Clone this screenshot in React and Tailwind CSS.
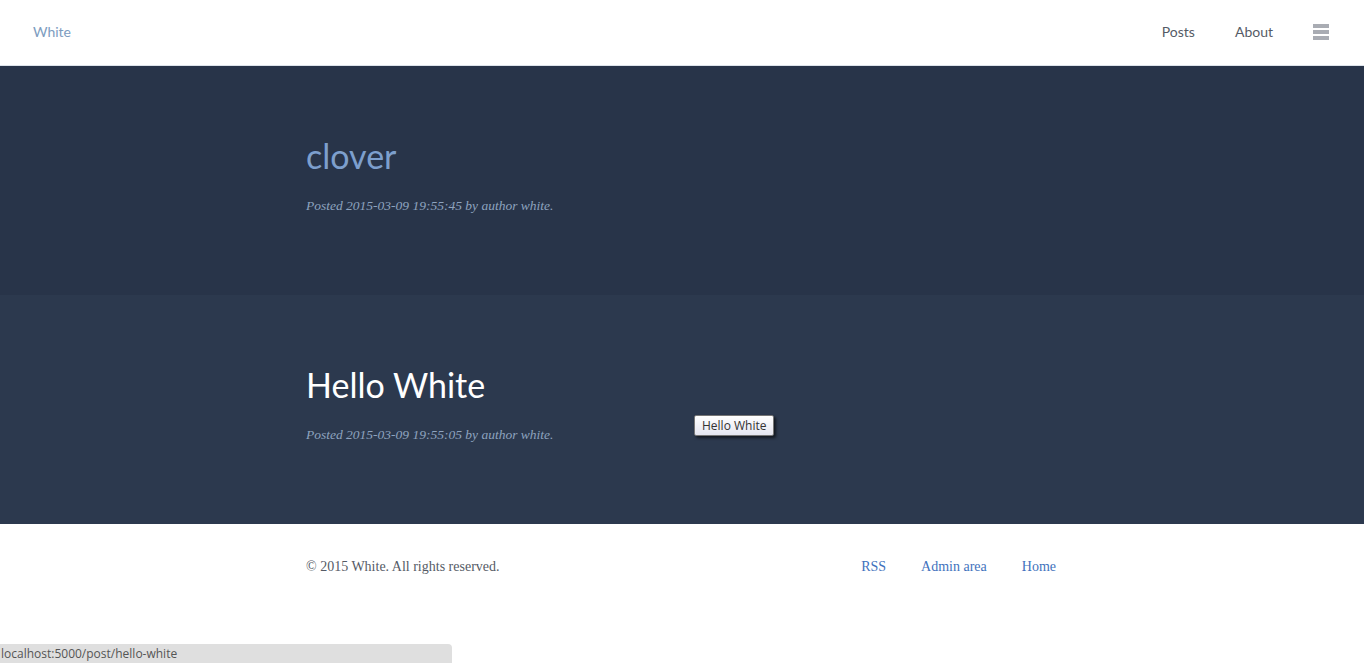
export default function App() {
  return (
    <div className="min-h-[663px] bg-white relative font-['Lato',sans-serif]">
      <header className="h-[66px] flex items-center justify-between pl-[33px] pr-[35px] pb-[3px] border-b border-[#dde3ea]">
        <a className="text-[14px] text-[#7d9cc0]">White</a>
        <nav className="flex items-center gap-[40px] text-[14px] text-[#555b66]">
          <a>Posts</a>
          <a>About</a>
          <span className="flex flex-col gap-[2px] w-[16px] mt-[1px]">
            <span className="h-[4px] bg-[#a9acb3]" />
            <span className="h-[4px] bg-[#a9acb3]" />
            <span className="h-[4px] bg-[#a9acb3]" />
          </span>
        </nav>
      </header>

      <section className="bg-[#283449] h-[229px]">
        <div className="w-[752px] mx-auto pt-[70px]">
          <h1 className="text-[34px] leading-[40px] text-[#7d9fcd]">clover</h1>
          <p className="mt-[20px] text-[13.5px] italic text-[#8ea3bf] font-['Liberation_Serif',serif]">
            Posted 2015-03-09 19:55:45 by author white.
          </p>
        </div>
      </section>

      <section className="bg-[#2c394e] h-[229px] relative">
        <div className="w-[752px] mx-auto pt-[70px]">
          <h1 className="text-[34px] leading-[40px] text-white">Hello White</h1>
          <p className="mt-[20px] text-[13.5px] italic text-[#8ea3bf] font-['Liberation_Serif',serif]">
            Posted 2015-03-09 19:55:05 by author white.
          </p>
        </div>
        <div className="absolute left-[694px] top-[120px] px-[7px] h-[21px] flex items-center text-[12px] text-[#333] bg-gradient-to-b from-white to-[#e4e5f0] border border-[#767676] rounded-[2px] shadow-[2px_2px_3px_rgba(0,0,0,0.6)] font-['Open_Sans',sans-serif]">
          Hello White
        </div>
      </section>

      <footer className="w-[752px] mx-auto pt-[32px] flex items-center justify-between font-['Liberation_Serif',serif] text-[14px]">
        <span className="text-[#555b66]">© 2015 White. All rights reserved.</span>
        <div className="flex gap-[35px] text-[#3f72bd] pr-[2px]">
          <a>RSS</a>
          <a>Admin area</a>
          <a>Home</a>
        </div>
      </footer>

      <div className="absolute left-0 bottom-0 w-[452px] h-[19px] bg-[#dfdfdf] rounded-tr-[4px] text-[12px] leading-[19px] text-[#555] pl-[1px] font-['Open_Sans',sans-serif]">
        localhost:5000/post/hello-white
      </div>
    </div>
  );
}
